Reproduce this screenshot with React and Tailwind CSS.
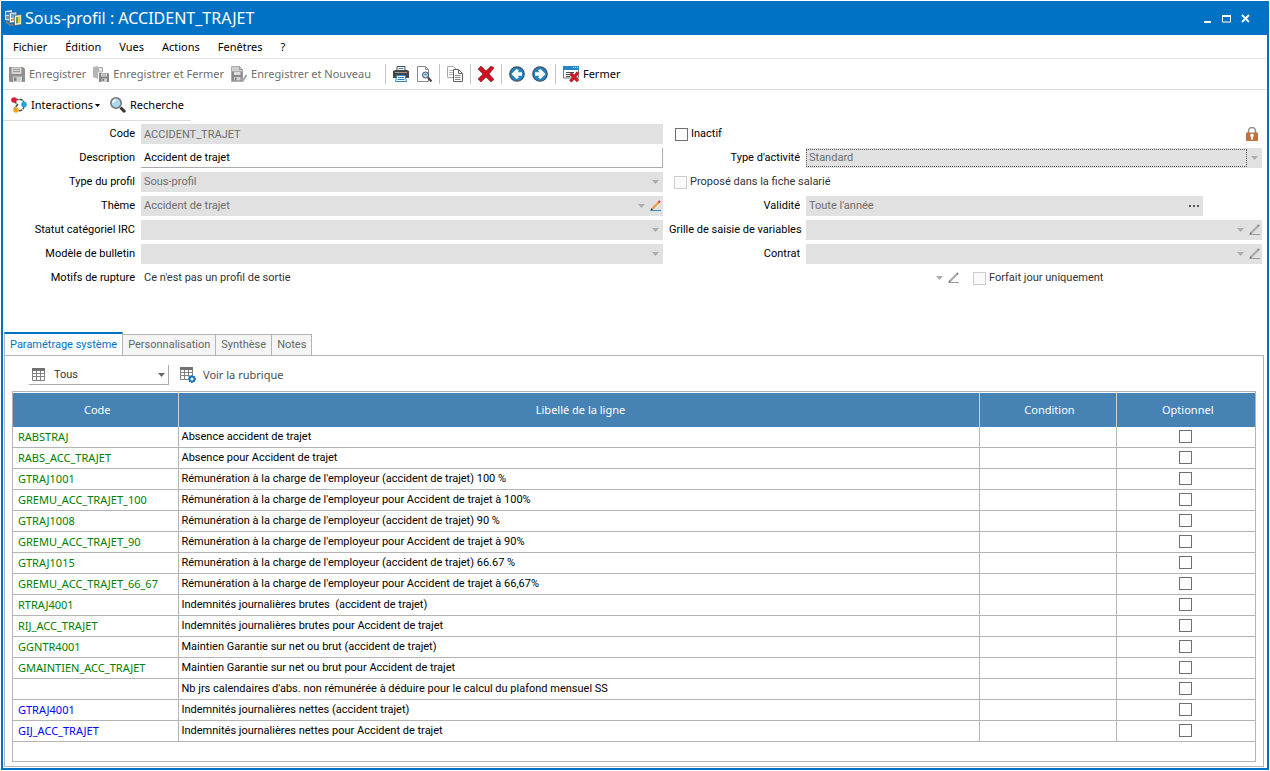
import React from 'react';
import clsx from 'clsx';

const rows = [
  { code: 'RABSTRAJ', label: 'Absence accident de trajet' },
  { code: 'RABS_ACC_TRAJET', label: 'Absence pour Accident de trajet' },
  { code: 'GTRAJ1001', label: "Rémunération à la charge de l'employeur (accident de trajet) 100 %" },
  { code: 'GREMU_ACC_TRAJET_100', label: "Rémunération à la charge de l'employeur pour Accident de trajet à 100%" },
  { code: 'GTRAJ1008', label: "Rémunération à la charge de l'employeur (accident de trajet) 90 %" },
  { code: 'GREMU_ACC_TRAJET_90', label: "Rémunération à la charge de l'employeur pour Accident de trajet à 90%" },
  { code: 'GTRAJ1015', label: "Rémunération à la charge de l'employeur (accident de trajet) 66.67 %" },
  { code: 'GREMU_ACC_TRAJET_66_67', label: "Rémunération à la charge de l'employeur pour Accident de trajet à 66,67%" },
  { code: 'RTRAJ4001', label: 'Indemnités journalières brutes  (accident de trajet)' },
  { code: 'RIJ_ACC_TRAJET', label: 'Indemnités journalières brutes pour Accident de trajet' },
  { code: 'GGNTR4001', label: 'Maintien Garantie sur net ou brut (accident de trajet)' },
  { code: 'GMAINTIEN_ACC_TRAJET', label: 'Maintien Garantie sur net ou brut pour Accident de trajet' },
  { code: '', label: "Nb jrs calendaires d'abs. non rémunérée à déduire pour le calcul du plafond mensuel SS" },
  { code: 'GTRAJ4001', label: 'Indemnités journalières nettes (accident trajet)', net: true },
  { code: 'GIJ_ACC_TRAJET', label: 'Indemnités journalières nettes pour Accident de trajet', net: true }
];

/* Icons */
const Svg = ({ children, className = 'size-4', box = '0 0 16 16' }) => (
  <svg viewBox={box} className={clsx('shrink-0', className)} fill="none" aria-hidden="true">{children}</svg>
);

const AppIcon = () => (
  <Svg className="size-[18px]" box="0 0 18 18">
    <path d="M0 2l7-1v11l-7-1z" fill="#d8dde2" />
    <path d="M1 3h5v3H1z" fill="#3f7fc4" />
    <path d="M1 7h4v3H1z" fill="#8c949c" />
    <path d="M4.500 4l7-1v10l-7 1z" fill="#eef3f7" stroke="#6b747c" strokeWidth=".7" />
    <path d="M6 5l4.500-.6v4L6 9z" fill="#58a8dc" />
    <path d="M6 10l3-.4v2L6 12z" fill="#c58a4a" />
    <path d="M9.500 6.500l7-1v10l-7 1z" fill="#f4f4f4" stroke="#5c5c5c" strokeWidth=".7" />
    <path d="M11 8l2-.3v6.500l-2 .3z" fill="#5fa346" />
    <path d="M13 7.700l2.500-.4v6.500l-2.500.4z" fill="#d9ce4e" />
    <path d="M1 12.500l4 3.500h3" stroke="#a9805a" strokeWidth="1.500" />
  </Svg>
);

const Floppy = () => (
  <Svg>
    <path d="M0 1h14l2 2v13H1l-1-1z" fill="#8f8f8f" />
    <path d="M2.500 1.500h10v6.500h-10z" fill="#d4d4d4" />
    <path d="M4 3.500h7M4 5.500h7" stroke="#9c9c9c" />
    <path d="M4 10.500h9V16H4z" fill="#d2d2d2" />
    <path d="M5 11.500h2.500V15H5z" fill="#808080" />
  </Svg>
);

const FloppyClose = () => (
  <Svg>
    <path d="M0 1l5-1v13l-5-2z" fill="#b5b5b5" />
    <path d="M5.500 1.500h4V6h-4z" fill="#e2e2e2" stroke="#b0b0b0" />
    <path d="M6 7h9l1 1v8H6z" fill="#858585" />
    <path d="M8 7.500h6v3H8z" fill="#ddd" />
    <path d="M9 9h4" stroke="#a5a5a5" />
    <path d="M8.500 12.500H14V16H8.500z" fill="#cfcfcf" />
    <path d="M9.500 13H11v2H9.500z" fill="#777" />
  </Svg>
);

const FloppyNew = () => (
  <Svg>
    <path d="M.5.500h8l3 3v12H.5z" fill="#cfcfcf" stroke="#adadad" />
    <path d="M8.500.5v3h3" stroke="#999" />
    <path d="M1 5.500h10.500V15H1z" fill="#8a8a8a" />
    <path d="M3 6h6.500v3H3z" fill="#dedede" />
    <path d="M3 11h6.500v3.500H3z" fill="#d2d2d2" />
    <path d="M4 11.500h1.500v3H4z" fill="#777" />
    <path d="M10 12l2 2.500L15.500 9" stroke="#a5a5a5" strokeWidth="2" />
  </Svg>
);

const Printer = () => (
  <Svg>
    <path d="M4 .5h8V5H4z" fill="#fff" stroke="#4b4b4b" />
    <path d="M5.500 2.500h5" stroke="#2d86c4" />
    <path d="M0 5l2-1h12l2 1v7h-3L12 9H4l-1 3H0z" fill="#454545" />
    <path d="M2 6.500h12" stroke="#999" />
    <path d="M4 9.500h8l1.500 6h-11z" fill="#fff" stroke="#2d86c4" />
    <path d="M5 11.500h6M4.500 13.500h7" stroke="#2d86c4" />
  </Svg>
);

const Preview = () => (
  <Svg>
    <path d="M1.500.5h8l3 3v12h-11z" fill="#fff" stroke="#8c8c8c" />
    <path d="M9.500.5v3h3" stroke="#8c8c8c" />
    <circle cx="9.500" cy="9" r="3" fill="#b5dcf3" stroke="#4d4d4d" />
    <path d="M12 11.500l3.500 4" stroke="#444" strokeWidth="2" />
    <path d="M8 8.500h3" stroke="#3c94cf" />
  </Svg>
);

const Copy = () => (
  <Svg>
    <path d="M.5.5h6l2.500 2.500v8.500H.5z" fill="#fff" stroke="#a9a9a9" />
    <path d="M2 4.500h4M2 6.500h4M2 8.500h4" stroke="#b5b5b5" />
    <path d="M6.500 3.500h5l4 4v8h-9z" fill="#fff" stroke="#5f5f5f" />
    <path d="M11.500 4v3.500h3.500" stroke="#5f5f5f" />
    <path d="M8 9.500h5.500M8 11.500h5.500M8 13.500h5.500" stroke="#858585" />
  </Svg>
);

const Delete = () => (
  <Svg>
    <path d="M0 3l3-3 5 5 5-5 3 2-5 6 5 5.500L13 16l-5-5-5 5-3-3 5-5z" fill="#d40f1f" stroke="#6b3034" strokeWidth=".7" />
  </Svg>
);

const Nav = ({ next }) => (
  <Svg>
    <circle cx="8" cy="8" r="7.200" fill="#2484c6" stroke="#3f5364" strokeWidth="1.300" />
    {next
      ? <path d="M3 6.200h4.500L6 4.500 8.500 3l5 5-5 5L6 11.500l1.500-1.700H3z" fill="#fff" />
      : <path d="M13 6.200H8.500L10 4.500 7.500 3l-5 5 5 5 2.500-1.500-1.500-1.700H13z" fill="#fff" />}
  </Svg>
);

const CloseWindow = () => (
  <Svg>
    <path d="M.5 1h15v11H.5z" fill="#fff" stroke="#777" />
    <path d="M0 0h16v4H0z" fill="#2484c6" />
    <path d="M10 1.500h1M12 1.500h1M14 1.500h1" stroke="#fff" />
    <path d="M3 6.500h8M3 8.500h4M3 10.500h4" stroke="#4c4c4c" />
    <path d="M7.500 7.500l7.500 7.500M15 6.500L7.500 15.500" stroke="#7f262d" strokeWidth="3.200" />
    <path d="M7.500 7.500l7.500 7.500M15 6.500L7.500 15.500" stroke="#e01727" strokeWidth="2" />
  </Svg>
);

const Interactions = () => (
  <Svg>
    <path d="M4 2.500h5c2.500 0 4 1.500 4 4M3 4l3.500 3.500L3 12M13 9c0 3.500-3 5.500-7 4.500" stroke="#4b4b4b" strokeWidth="1.500" strokeDasharray="3.500 .8" />
    <circle cx="3" cy="3" r="2.800" fill="#e3173a" />
    <circle cx="13" cy="7.500" r="2.800" fill="#27a3dc" />
    <circle cx="5" cy="13" r="2.700" fill="#f3a31c" />
  </Svg>
);

const Search = () => (
  <Svg>
    <circle cx="6" cy="6" r="5.200" fill="#a9daf2" stroke="#777" strokeWidth="1.600" />
    <path d="M3 6a3 3 0 013-3" stroke="#fff" strokeWidth="1.500" />
    <path d="M10.500 10.500l4.500 4.500" stroke="#333" strokeWidth="3" />
  </Svg>
);

const GridIcon = ({ gear }) => (
  <Svg className={gear ? 'size-4' : 'size-[14px]'} box={gear ? '0 0 16 16' : '0 0 14 14'}>
    <path d="M.5.5h12v12H.5zM0 5.500h13M0 8.500h13M4.500 3v10M8.500 3v10" stroke="#808080" />
    <path d="M0 0h13v3H0z" fill="#727272" />
    {gear && (
      <>
        <circle cx="12" cy="12" r="4" fill="#fff" />
        <circle cx="12" cy="12" r="2.500" stroke="#1f78b8" strokeWidth="2" />
        <path d="M12 8v1M12 15v1M8 12h1M15 12h1M9.200 9.200l.6.6M14.200 14.200l.6.6M14.800 9.200l-.6.6M9.200 14.800l.6-.6" stroke="#1f78b8" strokeWidth="1.600" />
      </>
    )}
  </Svg>
);

const Lock = () => (
  <Svg className="h-[14px] w-3" box="0 0 12 14">
    <path d="M2.500 7V4a3.500 3.500 0 017 0v3" stroke="#8f8f8f" strokeWidth="1.600" />
    <rect y="5.500" width="12" height="8.500" rx="1" fill="#c0713c" />
    <path d="M5 12.500V10a1.800 1.800 0 112 0v2.500z" fill="#fff" />
  </Svg>
);

const Pencil = ({ color }) => (
  <Svg className="size-3" box="0 0 12 12">
    <path d="M2 9l6.500-6.500" stroke={color ? '#f09a3e' : '#aaa'} strokeWidth="2.200" />
    <path d="M8.500 2.500L10 1" stroke={color ? '#e2344a' : '#8a8a8a'} strokeWidth="2.200" />
    <path d="M0 11l1.500-3 1.500 1.500z" fill={color ? '#444' : '#777'} />
    <path d="M1 10.500h10" stroke={color ? '#2f8fcb' : '#999'} />
  </Svg>
);

const Arrow = ({ className = 'text-[#ababab]' }) => (
  <Svg className={clsx('h-1 w-[7px]', className)} box="0 0 7 4">
    <path d="M0 0h7L3.500 4z" fill="currentColor" />
  </Svg>
);

/* Form pieces */
const Label = ({ id, children }) => (
  <label htmlFor={id} className="text-right whitespace-nowrap">{children}</label>
);

const SelectField = ({ id, value = '', edit, color, focused, plain }) => (
  <div className={clsx('flex h-5 min-w-0 items-center', plain ? 'bg-white' : 'bg-[#e1e1e1]', edit ? 'gap-1 pr-px' : 'pr-1')}>
    <select
      id={id}
      disabled
      className={clsx(
        'h-[18px] min-w-0 flex-1 appearance-none border px-[2px] opacity-100 outline-none',
        focused ? 'border-dotted border-[#555]' : 'border-transparent',
        plain ? 'text-[#333]' : 'text-[#6d6d6d]'
      )}
    >
      <option>{value}</option>
    </select>
    <Arrow className={focused ? 'ml-1 text-[#ababab]' : 'text-[#ababab]'} />
    {edit && <button type="button" aria-label="Modifier" className="ml-px"><Pencil color={color} /></button>}
  </div>
);

const Check = ({ label, disabled }) => (
  <label className="flex h-5 items-center gap-[3px] whitespace-nowrap">
    <input
      type="checkbox"
      disabled={disabled}
      className={clsx('size-[13px] appearance-none border', disabled ? 'border-[#ccc] bg-[#fafafa]' : 'border-[#707070] bg-white')}
    />
    <span className={disabled ? 'text-[#333]' : 'text-black'}>{label}</span>
  </label>
);

const ToolButton = ({ icon: Icon, children, muted, label, next }) => (
  <button type="button" aria-label={label} className={clsx('flex h-6 items-center gap-1 whitespace-nowrap', muted ? 'text-[#6d6d6d]' : 'text-black')}>
    <Icon next={next} />
    {children}
  </button>
);

const Sep = () => <span className="h-5 w-px bg-[#c4c4c4]" />;

export default function App() {
  return (
    <div className="flex min-h-screen flex-col bg-white p-px font-['Roboto',sans-serif] text-[11px] leading-4 text-black">
      <div className="flex flex-1 flex-col border-2 border-t-0 border-[#0072c6]">
        {/* Title bar */}
        <header className="flex h-[34px] items-center bg-[#0072c6] pr-[17px] pl-[2px] text-white">
          <AppIcon />
          <h1 className="ml-[2px] flex-1 font-['Noto_Sans',sans-serif] text-base">Sous-profil : ACCIDENT_TRAJET</h1>
          <div className="flex items-center gap-[10px]">
            <button type="button" aria-label="Réduire"><Svg className="h-[9px] w-[9px]" box="0 0 9 9"><path d="M1 8h7" stroke="#fff" strokeWidth="2" /></Svg></button>
            <button type="button" aria-label="Agrandir"><Svg className="h-[9px] w-[9px]" box="0 0 9 9"><path d="M.5 2h8v6h-8z" stroke="#fff" /><path d="M0 2h9" stroke="#fff" strokeWidth="2" /></Svg></button>
            <button type="button" aria-label="Fermer la fenêtre"><Svg className="h-[9px] w-[9px]" box="0 0 9 9"><path d="M1 1l7 7M8 1L1 8" stroke="#fff" strokeWidth="1.800" /></Svg></button>
          </div>
        </header>

        {/* Menu */}
        <nav className="flex h-6 items-center gap-[18px] border-b border-[#e5e5e5] px-[10px] font-['Noto_Sans',sans-serif]">
          {['Fichier', 'Édition', 'Vues', 'Actions', 'Fenêtres', '?'].map((item) => (
            <button key={item} type="button">{item}</button>
          ))}
        </nav>

        {/* Toolbar */}
        <div className="flex h-[31px] items-center gap-[7px] border-b border-[#dcdcdc] px-[6px] font-['Noto_Sans',sans-serif]">
          <ToolButton icon={Floppy} muted>Enregistrer</ToolButton>
          <ToolButton icon={FloppyClose} muted>Enregistrer et Fermer</ToolButton>
          <ToolButton icon={FloppyNew} muted>Enregistrer et Nouveau</ToolButton>
          <span />
          <Sep />
          <ToolButton icon={Printer} label="Imprimer" />
          <ToolButton icon={Preview} label="Aperçu" />
          <Sep />
          <ToolButton icon={Copy} label="Copier" />
          <Sep />
          <ToolButton icon={Delete} label="Supprimer" />
          <Sep />
          <ToolButton icon={Nav} label="Précédent" />
          <ToolButton icon={Nav} next label="Suivant" />
          <Sep />
          <ToolButton icon={CloseWindow}>Fermer</ToolButton>
        </div>
        <div className="flex h-[31px] w-[188px] items-center gap-[10px] border-b border-[#dcdcdc] px-2 font-['Noto_Sans',sans-serif]">
          <button type="button" className="flex items-center gap-1">
            <Interactions />
            Interactions
            <Svg className="-ml-[2px] h-[3px] w-[5px]" box="0 0 5 3"><path d="M0 0h5L2.500 3z" fill="#000" /></Svg>
          </button>
          <button type="button" className="flex items-center gap-1"><Search />Recherche</button>
        </div>

        {/* Form */}
        <div className="flex flex-col gap-1 pt-[3px] pr-[5px]">
          <div className="grid grid-cols-[132px_minmax(0,522fr)_131px_minmax(0,456fr)] items-center gap-x-[6px] gap-y-1">
            <Label id="code">Code</Label>
            <input id="code" readOnly value="ACCIDENT_TRAJET" className="h-5 w-full bg-[#e1e1e1] px-[3px] text-[#6d6d6d] outline-none" />
            <div className="col-span-2 flex items-center justify-between pr-1 pl-[6px]">
              <Check label="Inactif" />
              <Lock />
            </div>

            <Label id="description">Description</Label>
            <input id="description" defaultValue="Accident de trajet" className="h-5 w-full border-r border-b border-[#ababab] px-[3px] outline-none" />
            <Label id="activite">Type d'activité</Label>
            <SelectField id="activite" value="Standard" focused />

            <Label id="type">Type du profil</Label>
            <SelectField id="type" value="Sous-profil" />
            <div className="col-span-2 pl-[5px]">
              <Check label="Proposé dans la fiche salarié" disabled />
            </div>

            <Label id="theme">Thème</Label>
            <SelectField id="theme" value="Accident de trajet" edit color />
            <Label id="validite">Validité</Label>
            <div className="mr-[59px] flex h-5 items-center bg-[#e1e1e1] pr-1">
              <input id="validite" readOnly value="Toute l'année" className="min-w-0 flex-1 px-[3px] text-[#6d6d6d] outline-none" />
              <button type="button" aria-label="Choisir la validité">
                <Svg className="h-[2px] w-[10px]" box="0 0 10 2"><path d="M0 0h2v2H0zM4 0h2v2H4zM8 0h2v2H8z" fill="#555" /></Svg>
              </button>
            </div>

            <Label id="statut">Statut catégoriel IRC</Label>
            <SelectField id="statut" />
            <Label id="grille">Grille de saisie de variables</Label>
            <SelectField id="grille" edit />

            <Label id="modele">Modèle de bulletin</Label>
            <SelectField id="modele" />
            <Label id="contrat">Contrat</Label>
            <SelectField id="contrat" edit />
          </div>
          <div className="grid grid-cols-[132px_minmax(0,820fr)_minmax(0,295fr)] items-center gap-x-[6px]">
            <Label id="motifs">Motifs de rupture</Label>
            <SelectField id="motifs" value="Ce n'est pas un profil de sortie" edit plain />
            <div className="pl-[6px]"><Check label="Forfait jour uniquement" disabled /></div>
          </div>
        </div>

        {/* Tabs */}
        <div role="tablist" className="mt-11 ml-px flex items-end text-[#666]">
          <button type="button" role="tab" aria-selected="true" className="-mb-px h-6 border-x border-t-2 border-x-[#b4b4b4] border-t-[#0072c6] bg-white px-[5px] text-[#0072c6]">Paramétrage système</button>
          {['Personnalisation', 'Synthèse', 'Notes'].map((tab) => (
            <button key={tab} type="button" role="tab" aria-selected="false" className="-ml-px h-[21px] border border-b-0 border-[#b4b4b4] bg-[#f5f5f5] px-[5px]">{tab}</button>
          ))}
        </div>

        <main className="mr-[3px] mb-px ml-px flex flex-1 flex-col border border-[#b4b4b4] px-[7px] pb-1">
          <div className="flex h-[35px] items-center gap-[11px] pt-[3px] pl-[17px] text-[#4b4b4b]">
            <div className="flex h-5 w-[140px] items-center border-r border-b border-[#ababab] px-[3px]">
              <GridIcon />
              <select aria-label="Filtre" className="min-w-0 flex-1 appearance-none pl-2 text-[#333] outline-none">
                <option>Tous</option>
              </select>
              <Arrow className="text-[#666]" />
            </div>
            <button type="button" className="flex items-center gap-[7px] font-['Noto_Sans',sans-serif]"><GridIcon gear />Voir la rubrique</button>
          </div>

          <div className="flex-1 border border-[#b4b4b4] pt-px">
            <table className="w-full table-fixed border-collapse text-left">
              <colgroup>
                <col className="w-[165px]" />
                <col />
                <col className="w-[137px]" />
                <col className="w-[139px]" />
              </colgroup>
              <thead>
                <tr className="h-[34px] bg-[#4682b4] text-center font-['Noto_Sans',sans-serif] text-white">
                  {['Code', 'Libellé de la ligne', 'Condition', 'Optionnel'].map((head) => (
                    <th key={head} scope="col" className="border-r border-[#d0d0d0] p-0 pl-1 font-normal last:border-r-0">{head}</th>
                  ))}
                </tr>
              </thead>
              <tbody>
                {rows.map((row, idx) => (
                  <tr key={idx} className="h-[21px] border-b border-[#b4b4b4] first:h-5">
                    <td className={clsx("border-r border-[#b4b4b4] p-0 pl-[5px] font-['Noto_Sans',sans-serif]", row.net ? 'text-[#0000ff]' : 'text-[#008000]')}>{row.code}</td>
                    <td className="border-r border-[#b4b4b4] p-0 pl-[3px] whitespace-pre">{row.label}</td>
                    <td className="border-r border-[#b4b4b4] p-0" />
                    <td className="p-0">
                      <input type="checkbox" aria-label={`Optionnel ${row.code || row.label}`} className="mx-auto block size-[13px] appearance-none border border-[#707070] bg-white" />
                    </td>
                  </tr>
                ))}
              </tbody>
            </table>
          </div>
        </main>
      </div>
    </div>
  );
}
